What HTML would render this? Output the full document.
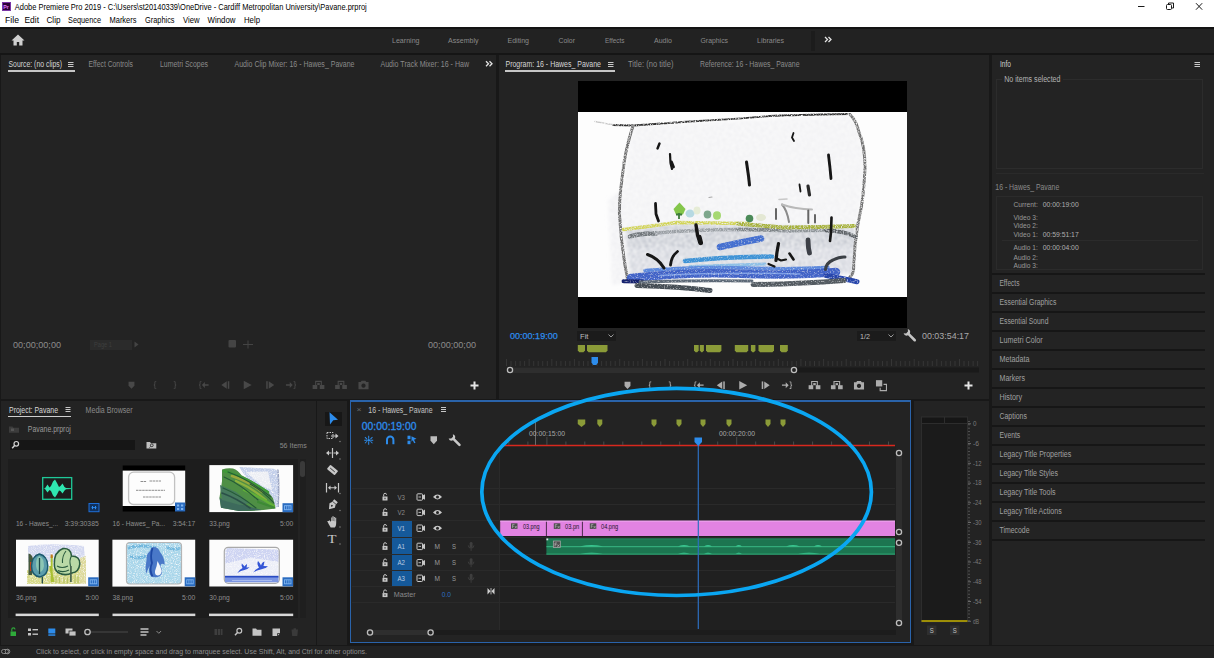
<!DOCTYPE html>
<html><head><meta charset="utf-8"><title>Adobe Premiere Pro 2019</title>
<style>
html,body{margin:0;padding:0;}
body{width:1214px;height:658px;overflow:hidden;background:#181818;position:relative;font-family:"Liberation Sans",sans-serif;}
.r{position:absolute;}
svg{position:absolute;left:0;top:0;overflow:visible;}
svg.tx text{font-family:"Liberation Sans",sans-serif;white-space:pre;}
</style></head><body>
<div class="r" style="left:0px;top:0px;width:1214px;height:26.5px;background:#ffffff;"></div>
<div class="r" style="left:0px;top:26.5px;width:1214px;height:2.5px;background:#131313;"></div>
<div class="r" style="left:0px;top:29px;width:1214px;height:23.5px;background:#222222;"></div>
<div class="r" style="left:811px;top:30.5px;width:3.5px;height:20px;background:#1c1c1c;"></div>
<div class="r" style="left:0px;top:52.5px;width:1214px;height:2.5px;background:#151515;"></div>
<div class="r" style="left:1px;top:55px;width:494.5px;height:343.5px;background:#232323;"></div>
<div class="r" style="left:498.5px;top:55px;width:490.5px;height:343.5px;background:#232323;"></div>
<div class="r" style="left:991.5px;top:55px;width:222.5px;height:590px;background:#232323;"></div>
<div class="r" style="left:1px;top:400.5px;width:314.5px;height:244px;background:#232323;"></div>
<div class="r" style="left:317px;top:400.5px;width:30px;height:244px;background:#232323;"></div>
<div class="r" style="left:350px;top:400.3px;width:561px;height:243px;background:#2a63aa;"></div>
<div class="r" style="left:351.2px;top:401.5px;width:558.6px;height:240.6px;background:#232323;"></div>
<div class="r" style="left:913.5px;top:400.5px;width:75.5px;height:244px;background:#232323;"></div>
<div class="r" style="left:0px;top:645.5px;width:1214px;height:12.5px;background:#222222;"></div>
<div class="r" style="left:1.5px;top:2.2px;width:9.4px;height:8.4px;background:#2a0438;border:1px solid #7a35a5;box-sizing:border-box;"></div>
<svg width="1214" height="658" class="tx">
<text x="3.3" y="8.50" font-size="5.5" fill="#e27dff" font-weight="bold" textLength="5.5" lengthAdjust="spacingAndGlyphs">Pr</text>
<text x="14.8" y="10.09" font-size="8.2" fill="#000" textLength="352" lengthAdjust="spacingAndGlyphs">Adobe Premiere Pro 2019 - C:\Users\st20140339\OneDrive - Cardiff Metropolitan University\Pavane.prproj</text>
<text x="5" y="23.39" font-size="8.2" fill="#000" textLength="14" lengthAdjust="spacingAndGlyphs">File</text>
<text x="24.5" y="23.39" font-size="8.2" fill="#000" textLength="14.5" lengthAdjust="spacingAndGlyphs">Edit</text>
<text x="46.5" y="23.39" font-size="8.2" fill="#000" textLength="14" lengthAdjust="spacingAndGlyphs">Clip</text>
<text x="68" y="23.39" font-size="8.2" fill="#000" textLength="33" lengthAdjust="spacingAndGlyphs">Sequence</text>
<text x="109.5" y="23.39" font-size="8.2" fill="#000" textLength="27" lengthAdjust="spacingAndGlyphs">Markers</text>
<text x="145" y="23.39" font-size="8.2" fill="#000" textLength="29.5" lengthAdjust="spacingAndGlyphs">Graphics</text>
<text x="183" y="23.39" font-size="8.2" fill="#000" textLength="16.5" lengthAdjust="spacingAndGlyphs">View</text>
<text x="207.5" y="23.39" font-size="8.2" fill="#000" textLength="28" lengthAdjust="spacingAndGlyphs">Window</text>
<text x="244" y="23.39" font-size="8.2" fill="#000" textLength="16" lengthAdjust="spacingAndGlyphs">Help</text>
</svg>
<svg width="1214" height="27"><g stroke="#1a1a1a" stroke-width="1" fill="none"><path d="M1138 6.500h6.500"/><rect x="1166.500" y="4.500" width="5" height="5" rx="1"/><path d="M1168.500 4.500v-1.500h5v5h-2"/><path d="M1196 3.200l6.200 6.500M1202.200 3.200l-6.200 6.500"/></g></svg>
<svg width="1214" height="60"><path d="M18 34.500l-6.500 6h2v5h3.300v-3.600h2.400v3.600h3.300v-5h2z" fill="#d0d0d0"/></svg>
<svg width="1214" height="658" class="tx">
<text x="392" y="42.72" font-size="8" fill="#8a8a8a" textLength="27.5" lengthAdjust="spacingAndGlyphs">Learning</text>
<text x="448" y="42.72" font-size="8" fill="#8a8a8a" textLength="30.5" lengthAdjust="spacingAndGlyphs">Assembly</text>
<text x="507.5" y="42.72" font-size="8" fill="#8a8a8a" textLength="21.5" lengthAdjust="spacingAndGlyphs">Editing</text>
<text x="558.5" y="42.72" font-size="8" fill="#8a8a8a" textLength="16.5" lengthAdjust="spacingAndGlyphs">Color</text>
<text x="605" y="42.72" font-size="8" fill="#8a8a8a" textLength="19.5" lengthAdjust="spacingAndGlyphs">Effects</text>
<text x="654" y="42.72" font-size="8" fill="#8a8a8a" textLength="18" lengthAdjust="spacingAndGlyphs">Audio</text>
<text x="700.5" y="42.72" font-size="8" fill="#8a8a8a" textLength="27.5" lengthAdjust="spacingAndGlyphs">Graphics</text>
<text x="757" y="42.72" font-size="8" fill="#8a8a8a" textLength="27" lengthAdjust="spacingAndGlyphs">Libraries</text>
</svg>
<svg width="1214" height="658"><path d="M825 37l2.500 2.500l-2.500 2.500M828.500 37l2.500 2.500l-2.500 2.500" fill="none" stroke="#e4e4e4" stroke-width="1.300"/></svg>
<svg width="1214" height="658" class="tx">
<text x="8.5" y="67.10" font-size="8.5" fill="#d6d6d6" textLength="53.5" lengthAdjust="spacingAndGlyphs">Source: (no clips)</text>
</svg>
<svg width="1214" height="100"><g stroke="#c8c8c8" stroke-width="1"><path d="M68 62.5h5.5M68 64.5h5.5M68 66.5h5.5"/><path d="M608 62.5h5.5M608 64.5h5.5M608 66.5h5.5"/><path d="M1194.5 62.5h5.5M1194.5 64.5h5.5M1194.5 66.5h5.5"/></g></svg>
<div class="r" style="left:8px;top:70.2px;width:66.5px;height:1.4px;background:#c6c6c6;"></div>
<svg width="1214" height="658" class="tx">
<text x="88.5" y="67.10" font-size="8.5" fill="#8a8a8a" textLength="44.5" lengthAdjust="spacingAndGlyphs">Effect Controls</text>
<text x="160" y="67.10" font-size="8.5" fill="#8a8a8a" textLength="48" lengthAdjust="spacingAndGlyphs">Lumetri Scopes</text>
<text x="234.5" y="67.10" font-size="8.5" fill="#8a8a8a" textLength="120" lengthAdjust="spacingAndGlyphs">Audio Clip Mixer: 16 - Hawes_ Pavane</text>
<text x="380.5" y="67.10" font-size="8.5" fill="#8a8a8a" textLength="88.5" lengthAdjust="spacingAndGlyphs">Audio Track Mixer: 16 - Haw</text>
</svg>
<svg width="1214" height="658"><path d="M486 61.200l2.500 2.500l-2.500 2.500M489.500 61.200l2.500 2.500l-2.500 2.500" fill="none" stroke="#e4e4e4" stroke-width="1.300"/></svg>
<svg width="1214" height="658" class="tx">
<text x="505.5" y="67.10" font-size="8.5" fill="#d6d6d6" textLength="95.5" lengthAdjust="spacingAndGlyphs">Program: 16 - Hawes_ Pavane</text>
</svg>
<div class="r" style="left:505px;top:70.2px;width:109.5px;height:1.4px;background:#c6c6c6;"></div>
<svg width="1214" height="658" class="tx">
<text x="628" y="67.10" font-size="8.5" fill="#8a8a8a" textLength="45.5" lengthAdjust="spacingAndGlyphs">Title: (no title)</text>
<text x="700" y="67.10" font-size="8.5" fill="#8a8a8a" textLength="99.5" lengthAdjust="spacingAndGlyphs">Reference: 16 - Hawes_ Pavane</text>
<text x="13" y="347.78" font-size="9" fill="#8c8c8c" textLength="48" lengthAdjust="spacingAndGlyphs">00;00;00;00</text>
</svg>
<div class="r" style="left:90px;top:339.5px;width:42px;height:10px;background:#2b2b2b;"></div>
<svg width="1214" height="658" class="tx">
<text x="94" y="347.23" font-size="7.5" fill="#3e3e3e" textLength="18" lengthAdjust="spacingAndGlyphs">Page 1</text>
</svg>
<svg width="1214" height="658"><g fill="#444"><path d="M134.5 341.5l4 3l-4 3z"/><rect x="228.500" y="340" width="7.5" height="7.5" rx="1"/><path d="M243 344h10v1h-10zM247.500 340.500h1v8h-1z"/></g></svg>
<svg width="1214" height="658" class="tx">
<text x="428" y="347.78" font-size="9" fill="#8c8c8c" textLength="48" lengthAdjust="spacingAndGlyphs">00;00;00;00</text>
</svg>
<svg width="1214" height="658"><g fill="#484848" stroke="none"><g transform="translate(131.5,385) scale(0.84) translate(-131.5,-385)"><path d="M128.0 381h7v5l-3.500 3.500l-3.500 -3.500z"/></g><g transform="translate(155,385) scale(0.84) translate(-155,-385)"><path d="M156.5 380.5h-1.200q-1 0 -1 1v2.300l-1 1.200l1 1.200v2.300q0 1 1 1h1.200v-1h-0.800q-0.400 0 -0.400 -0.400v-2.400l-0.800 -0.700l0.800 -0.700v-2.400q0 -0.400 0.400 -0.400h0.800z"/></g><g transform="translate(175,385) scale(0.84) translate(-175,-385)"><path d="M173.5 380.5h1.200q1 0 1 1v2.300l1 1.200l-1 1.200v2.300q0 1 -1 1h-1.200v-1h0.800q0.400 0 0.400 -0.400v-2.400l0.800 -0.700l-0.800 -0.700v-2.400q0 -0.400 -0.400 -0.400h-0.800z"/></g><g transform="translate(204,385) scale(0.84) translate(-204,-385)"><path d="M201.0 380.5h-1.200q-1 0 -1 1v2.300l-1 1.200l1 1.200v2.300q0 1 1 1h1.200v-1h-0.800q-0.400 0 -0.400 -0.400v-2.400l-0.800 -0.700l0.800 -0.700v-2.400q0 -0.400 0.400 -0.400h0.800z"/><path d="M201.5 385l3.500 -3.500v2.700h4.500v1.600h-4.500v2.700z"/></g><g transform="translate(225.5,385) scale(0.84) translate(-225.5,-385)"><path d="M220.5 385l6.500 -4.500v9z"/><rect x="228.2" y="380.5" width="1.800" height="9"/></g><g transform="translate(247.5,385) scale(0.84) translate(-247.5,-385)"><path d="M243.0 380l9.500 5l-9.500 5z"/></g><g transform="translate(270,385) scale(0.84) translate(-270,-385)"><rect x="265.5" y="380.5" width="1.800" height="9"/><path d="M268.5 380.5l6.500 4.500l-6.500 4.500z"/></g><g transform="translate(291,385) scale(0.84) translate(-291,-385)"><path d="M285 384.2h4.500v-2.700l3.500 3.500l-3.500 3.500v-2.700h-4.500z"/><path d="M294.0 380.5h1.200q1 0 1 1v2.300l1 1.200l-1 1.200v2.300q0 1 -1 1h-1.200v-1h0.800q0.400 0 0.400 -0.400v-2.400l0.800 -0.700l-0.800 -0.700v-2.400q0 -0.400 -0.400 -0.400h-0.800z"/></g><g transform="translate(318.5,385) scale(0.84) translate(-318.5,-385)"><rect x="311.5" y="385" width="5.500" height="4.800"/><rect x="320.0" y="385" width="5.500" height="4.800"/><path d="M314.5 380h8v6h-1.300v-4.700h-5.400v4.700h-1.300z"/><rect x="317.0" y="382.5" width="3" height="2.500"/></g><g transform="translate(341,385) scale(0.84) translate(-341,-385)"><rect x="334" y="385" width="5.500" height="4.800"/><rect x="342.5" y="385" width="5.500" height="4.800"/><path d="M337 380h8v6h-1.300v-4.700h-5.400v4.700h-1.300z"/><rect x="339.5" y="382.5" width="3" height="2.500"/></g><g transform="translate(363.5,385) scale(0.84) translate(-363.5,-385)"><path d="M357.5 381.5h2.700l1 -1.500h4.600l1 1.500h2.700v8.500h-12z M363.5 383.3a2.500 2.500 0 1 0 0.010 0z"/></g></g></svg>
<svg width="1214" height="658"><path d="M474.5 381.500v8M470.500 385.500h8" stroke="#e6e6e6" stroke-width="2" fill="none"/><path d="M968.500 381.500v8M964.500 385.500h8" stroke="#e6e6e6" stroke-width="2" fill="none"/></svg>
<svg width="1214" height="658" class="tx">
<text x="510" y="339.16" font-size="9.5" fill="#2d8ceb" textLength="47.7" lengthAdjust="spacingAndGlyphs" stroke="#2d8ceb" stroke-width="0.250">00:00:19:00</text>
</svg>
<div class="r" style="left:576.5px;top:331px;width:39px;height:9.5px;background:#1b1b1b;"></div>
<svg width="1214" height="658" class="tx">
<text x="580" y="338.62" font-size="8" fill="#bdbdbd" textLength="8.5" lengthAdjust="spacingAndGlyphs">Fit</text>
</svg>
<div class="r" style="left:856.5px;top:331px;width:39px;height:9.5px;background:#1b1b1b;"></div>
<svg width="1214" height="658" class="tx">
<text x="860" y="338.62" font-size="8" fill="#bdbdbd" textLength="10" lengthAdjust="spacingAndGlyphs">1/2</text>
</svg>
<svg width="1214" height="658"><g stroke="#9a9a9a" stroke-width="1" fill="none"><path d="M608.500 334.500l2.500 2.500l2.500 -2.500"/><path d="M888.500 334.500l2.500 2.500l2.500 -2.500"/></g><g transform="translate(910,335.5) rotate(-45)"><path d="M-1.300 -1.500v8.200a1.300 1.300 0 0 0 2.600 0v-8.200a3.400 3.400 0 0 0 1.700 -4.600l-1.700 1.900h-2.600l-1.700 -1.900a3.400 3.400 0 0 0 1.700 4.600z" fill="#c4c4c4"/></g></svg>
<svg width="1214" height="658" class="tx">
<text x="922" y="339.16" font-size="9.5" fill="#a9a9a9" textLength="47" lengthAdjust="spacingAndGlyphs">00:03:54:17</text>
</svg>
<svg width="1214" height="658"><g fill="#8b9b38"><path d="M577.8 345h7.2v5.5l-1.500 1.800h-4.2l-1.500 -1.800z"/><path d="M587 345h20.5v5.5l-1.500 1.800h-17.5l-1.500 -1.800z"/><path d="M694 345h4.7v5.5l-1.500 1.800h-1.7l-1.500 -1.800z"/><path d="M699.8 345h4.1v5.5l-1.500 1.800h-1.1l-1.500 -1.800z"/><path d="M706 345h15.4v5.5l-1.500 1.800h-12.4l-1.500 -1.800z"/><path d="M734.8 345h13.4v5.5l-1.500 1.800h-10.4l-1.500 -1.800z"/><path d="M750.9 345h4.5v5.5l-1.500 1.800h-1.5l-1.500 -1.800z"/><path d="M758.5 345h15.5v5.5l-1.500 1.800h-12.5l-1.500 -1.800z"/><path d="M780 345h7.8v5.5l-1.500 1.800h-4.8l-1.500 -1.800z"/></g><g stroke="#363636" stroke-width="1"><path d="M506.5 359v7"/><path d="M511.0 361v5"/><path d="M515.6 361v5"/><path d="M520.1 361v5"/><path d="M524.6 361v5"/><path d="M529.1 359v7"/><path d="M533.7 361v5"/><path d="M538.2 361v5"/><path d="M542.7 361v5"/><path d="M547.3 361v5"/><path d="M551.8 359v7"/><path d="M556.3 361v5"/><path d="M560.9 361v5"/><path d="M565.4 361v5"/><path d="M569.9 361v5"/><path d="M574.4 359v7"/><path d="M579.0 361v5"/><path d="M583.5 361v5"/><path d="M588.0 361v5"/><path d="M592.6 361v5"/><path d="M597.1 359v7"/><path d="M601.6 361v5"/><path d="M606.2 361v5"/><path d="M610.7 361v5"/><path d="M615.2 361v5"/><path d="M619.7 359v7"/><path d="M624.3 361v5"/><path d="M628.8 361v5"/><path d="M633.3 361v5"/><path d="M637.9 361v5"/><path d="M642.4 359v7"/><path d="M646.9 361v5"/><path d="M651.5 361v5"/><path d="M656.0 361v5"/><path d="M660.5 361v5"/><path d="M665.0 359v7"/><path d="M669.6 361v5"/><path d="M674.1 361v5"/><path d="M678.6 361v5"/><path d="M683.2 361v5"/><path d="M687.7 359v7"/><path d="M692.2 361v5"/><path d="M696.8 361v5"/><path d="M701.3 361v5"/><path d="M705.8 361v5"/><path d="M710.3 359v7"/><path d="M714.9 361v5"/><path d="M719.4 361v5"/><path d="M723.9 361v5"/><path d="M728.5 361v5"/><path d="M733.0 359v7"/><path d="M737.5 361v5"/><path d="M742.1 361v5"/><path d="M746.6 361v5"/><path d="M751.1 361v5"/><path d="M755.6 359v7"/><path d="M760.2 361v5"/><path d="M764.7 361v5"/><path d="M769.2 361v5"/><path d="M773.8 361v5"/><path d="M778.3 359v7"/><path d="M782.8 361v5"/><path d="M787.4 361v5"/><path d="M791.9 361v5"/><path d="M796.4 361v5"/><path d="M800.9 359v7"/><path d="M805.5 361v5"/><path d="M810.0 361v5"/><path d="M814.5 361v5"/><path d="M819.1 361v5"/><path d="M823.6 359v7"/><path d="M828.1 361v5"/><path d="M832.7 361v5"/><path d="M837.2 361v5"/><path d="M841.7 361v5"/><path d="M846.2 359v7"/><path d="M850.8 361v5"/><path d="M855.3 361v5"/><path d="M859.8 361v5"/><path d="M864.4 361v5"/><path d="M868.9 359v7"/><path d="M873.4 361v5"/><path d="M878.0 361v5"/><path d="M882.5 361v5"/><path d="M887.0 361v5"/><path d="M891.5 359v7"/><path d="M896.1 361v5"/><path d="M900.6 361v5"/><path d="M905.1 361v5"/><path d="M909.7 361v5"/><path d="M914.2 359v7"/><path d="M918.7 361v5"/><path d="M923.3 361v5"/><path d="M927.8 361v5"/><path d="M932.3 361v5"/><path d="M936.8 359v7"/><path d="M941.4 361v5"/><path d="M945.9 361v5"/><path d="M950.4 361v5"/><path d="M955.0 361v5"/><path d="M959.5 359v7"/><path d="M964.0 361v5"/><path d="M968.6 361v5"/><path d="M973.1 361v5"/><path d="M977.6 361v5"/></g><rect x="510" y="367.500" width="469" height="5" fill="#1a1a1a"/><rect x="510" y="367.500" width="284" height="5.500" rx="2.500" fill="#2e2e2e"/><g fill="#232323" stroke="#bdbdbd" stroke-width="1.300"><circle cx="510" cy="370" r="2.600"/><circle cx="794" cy="370" r="2.600"/></g><path d="M591.500 357h6.500v5.500l-1.700 2.500h-3.100l-1.700 -2.500z" fill="#2d8ceb"/></svg>
<svg width="1214" height="658"><g fill="#adadad" stroke="none"><g transform="translate(627.5,385.2) scale(0.84) translate(-627.5,-385.2)"><path d="M624.0 381.2h7v5l-3.500 3.500l-3.500 -3.500z"/></g><g transform="translate(650,385.2) scale(0.84) translate(-650,-385.2)"><path d="M651.5 380.7h-1.200q-1 0 -1 1v2.300l-1 1.200l1 1.200v2.300q0 1 1 1h1.200v-1h-0.800q-0.400 0 -0.400 -0.400v-2.400l-0.800 -0.700l0.800 -0.700v-2.400q0 -0.400 0.400 -0.400h0.800z"/></g><g transform="translate(670,385.2) scale(0.84) translate(-670,-385.2)"><path d="M668.5 380.7h1.200q1 0 1 1v2.300l1 1.200l-1 1.200v2.300q0 1 -1 1h-1.200v-1h0.800q0.400 0 0.400 -0.400v-2.400l0.800 -0.700l-0.800 -0.700v-2.400q0 -0.400 -0.400 -0.400h-0.800z"/></g><g transform="translate(699,385.2) scale(0.84) translate(-699,-385.2)"><path d="M696.0 380.7h-1.200q-1 0 -1 1v2.300l-1 1.200l1 1.200v2.300q0 1 1 1h1.200v-1h-0.800q-0.400 0 -0.400 -0.400v-2.400l-0.800 -0.700l0.800 -0.700v-2.400q0 -0.400 0.400 -0.400h0.800z"/><path d="M696.5 385.2l3.500 -3.500v2.700h4.500v1.600h-4.500v2.700z"/></g><g transform="translate(721,385.2) scale(0.84) translate(-721,-385.2)"><path d="M716 385.2l6.500 -4.500v9z"/><rect x="723.7" y="380.7" width="1.800" height="9"/></g><g transform="translate(743,385.2) scale(0.84) translate(-743,-385.2)"><path d="M738.5 380.2l9.500 5l-9.500 5z"/></g><g transform="translate(765.5,385.2) scale(0.84) translate(-765.5,-385.2)"><rect x="761.0" y="380.7" width="1.800" height="9"/><path d="M764.0 380.7l6.500 4.500l-6.500 4.500z"/></g><g transform="translate(787,385.2) scale(0.84) translate(-787,-385.2)"><path d="M781 384.4h4.500v-2.700l3.500 3.500l-3.500 3.500v-2.700h-4.500z"/><path d="M790.0 380.7h1.200q1 0 1 1v2.300l1 1.200l-1 1.200v2.300q0 1 -1 1h-1.200v-1h0.800q0.400 0 0.400 -0.400v-2.400l0.800 -0.700l-0.800 -0.700v-2.400q0 -0.400 -0.400 -0.400h-0.800z"/></g><g transform="translate(814.5,385.2) scale(0.84) translate(-814.5,-385.2)"><rect x="807.5" y="385.2" width="5.500" height="4.800"/><rect x="816.0" y="385.2" width="5.500" height="4.800"/><path d="M810.5 380.2h8v6h-1.300v-4.700h-5.400v4.700h-1.300z"/><rect x="813.0" y="382.7" width="3" height="2.500"/></g><g transform="translate(836.8,385.2) scale(0.84) translate(-836.8,-385.2)"><rect x="829.8" y="385.2" width="5.500" height="4.800"/><rect x="838.3" y="385.2" width="5.500" height="4.800"/><path d="M832.8 380.2h8v6h-1.300v-4.700h-5.400v4.700h-1.300z"/><rect x="835.3" y="382.7" width="3" height="2.500"/></g><g transform="translate(859,385.2) scale(0.84) translate(-859,-385.2)"><path d="M853 381.7h2.700l1 -1.500h4.600l1 1.500h2.700v8.500h-12z M859 383.5a2.500 2.500 0 1 0 0.010 0z"/></g><g transform="translate(881,385.2) scale(0.84) translate(-881,-385.2)"><rect x="875" y="379.2" width="7.500" height="7.500"/><path d="M880 388.2v3.500h7.500v-7.500h-3.500" fill="none" stroke="#adadad" stroke-width="1.300"/></g></g></svg>
<div class="r" style="left:578px;top:81px;width:329px;height:247px;background:#000;"></div>
<div class="r" style="left:578px;top:112px;width:329px;height:185px;background:#fdfdfd;"></div>
<svg width="1214" height="658"><defs><filter id="cr" x="-5%" y="-30%" width="110%" height="160%"><feTurbulence type="fractalNoise" baseFrequency="0.85" numOctaves="2" seed="4" result="n"/><feColorMatrix in="n" type="matrix" values="0 0 0 0 0 0 0 0 0 0 0 0 0 0 0 0 0 0 -2.600 2.100" result="m"/><feComposite in="SourceGraphic" in2="m" operator="in"/><feGaussianBlur stdDeviation="0.400"/></filter><filter id="wash" x="-5%" y="-10%" width="110%" height="120%"><feTurbulence type="fractalNoise" baseFrequency="0.550" numOctaves="3" seed="9" result="n"/><feColorMatrix in="n" type="matrix" values="0 0 0 0 0 0 0 0 0 0 0 0 0 0 0 0 0 0 -2.200 1.600" result="m"/><feGaussianBlur in="SourceGraphic" stdDeviation="1.500" result="b"/><feComposite in="b" in2="m" operator="in"/><feGaussianBlur stdDeviation="0.900"/></filter><filter id="cr2" x="-5%" y="-30%" width="110%" height="160%"><feTurbulence type="fractalNoise" baseFrequency="0.700" numOctaves="2" seed="7" result="n"/><feColorMatrix in="n" type="matrix" values="0 0 0 0 0 0 0 0 0 0 0 0 0 0 0 0 0 0 -2.200 2.150" result="m"/><feComposite in="SourceGraphic" in2="m" operator="in"/><feGaussianBlur stdDeviation="0.450"/></filter><filter id="ink" x="-20%" y="-20%" width="140%" height="140%"><feGaussianBlur stdDeviation="0.350"/></filter><clipPath id="vc"><rect x="578" y="112" width="329" height="185"/></clipPath></defs><g clip-path="url(#vc)"><g filter="url(#wash)"><path d="M633 126L850 115Q866 140 865 170L856 230L852 275L628 279L620 205Z" fill="#eeeef1"/><path d="M608 200L622 190L626 282L612 285Z" fill="#ececf0"/><path d="M625 229L676 224L748 225L855 228L853 274L630 278Z" fill="#c4c8d2"/><path d="M626 229L676 224L748 225L855 228L855 246L628 248Z" fill="#b2b7c2"/></g><g fill="none" stroke-linecap="round" stroke-linejoin="round" filter="url(#cr)"><path d="M613 125L633.500 125.500L690 121.500L738 118.600L773 115.800L820 114.500L850 114" stroke="#2e2e2e" stroke-width="1.900"/><path d="M595 121.500L613 124.800" stroke="#c8c8c8" stroke-width="1.500"/><path d="M633 126Q625 150 622.500 175Q619 200 619.500 215Q621 245 627.500 279" stroke="#6f6f6f" stroke-width="3"/><path d="M850 114.500Q856 120 859 132Q865 146 865 168Q864 190 861.500 206Q857 226 855 245L853.500 270Q852.500 275 850 277" stroke="#727272" stroke-width="3"/><path d="M630 236.500Q640 233 656 233.500" stroke="#6f7579" stroke-width="4.500"/><path d="M656 233Q700 229 748 229.500L790 231" stroke="#9a9fa4" stroke-width="3.500"/><path d="M738 229.500L783 230" stroke="#7e8488" stroke-width="3.500"/><path d="M790 231L826 230.500" stroke="#8e9498" stroke-width="3"/><path d="M826 230.500Q845 231 856 237" stroke="#5d6266" stroke-width="3.800"/><path d="M623.500 229.500Q650 226.500 676 222.500L748 223.500" stroke="#d2d458" stroke-width="3.600"/><path d="M738 223.800L783 227.500L820 227L854 226" stroke="#a5b038" stroke-width="4"/></g><g fill="none" stroke-linecap="round" stroke-linejoin="round" filter="url(#cr2)"><path d="M720 247Q740 242.500 761 238.500" stroke="#456fd0" stroke-width="6.500"/><path d="M685 261Q720 257.500 748 257L772 256.500" stroke="#3f93d6" stroke-width="4.600"/><path d="M690 266.500L765 264" stroke="#8fc0e6" stroke-width="3"/><path d="M645 270.500Q700 266 748 268Q790 269.500 828 267.500" stroke="#5c88dc" stroke-width="3.500"/><path d="M631 278Q690 271.500 748 274Q800 275.500 836 272" stroke="#3558c4" stroke-width="8.500" stroke-opacity="0.920"/><path d="M660 275.500Q720 272 800 274" stroke="#7d9fe6" stroke-width="1.500"/><path d="M623.500 281.300L642 281.500" stroke="#17246e" stroke-width="4"/><path d="M826 275.500Q845 279 857 281.800" stroke="#2845aa" stroke-width="5"/><path d="M640 282Q700 280 752 281" stroke="#5c6876" stroke-width="3"/><path d="M637 285.500Q680 286.500 710 290.500" stroke="#454d54" stroke-width="5"/><path d="M753 284.500Q800 284 844 280.500" stroke="#525a61" stroke-width="5"/></g><g fill="none" stroke-linecap="round" stroke-linejoin="round" filter="url(#ink)"><path d="M659.500 143.500L657.500 148.500" stroke="#141414" stroke-width="2.400"/><path d="M670 154L670.500 163L672 169" stroke="#141414" stroke-width="2.200"/><path d="M671.500 162L673.500 167" stroke="#141414" stroke-width="2.800"/><path d="M746.500 162L748.500 176L749.500 185" stroke="#141414" stroke-width="3"/><path d="M793.500 133L792 137.500L794 141" stroke="#141414" stroke-width="1.800"/><path d="M828.500 155L830 168L831 178.500" stroke="#141414" stroke-width="2.800"/><path d="M799.500 184.500L800.500 191.500" stroke="#141414" stroke-width="1.800"/><path d="M808 186L809.500 195" stroke="#2a2a2a" stroke-width="3.200"/><path d="M655.500 203.500L656 214L658.500 221" stroke="#141414" stroke-width="2.800"/><path d="M696 225L697.500 235L700 243" stroke="#141414" stroke-width="3.400"/><path d="M699.500 237L701 243" stroke="#141414" stroke-width="4.200"/><path d="M647.500 254.500Q658 258 664 268" stroke="#141414" stroke-width="3"/><path d="M677.500 251.500Q671.500 256 670.500 265" stroke="#141414" stroke-width="2.800"/><path d="M831.500 217.500L831 232L830 241" stroke="#141414" stroke-width="2.600"/><path d="M808 240L808.500 248L809.500 253" stroke="#3c4046" stroke-width="4.800"/><path d="M778.500 243.500L777 252L776 260.500" stroke="#141414" stroke-width="3.200"/><path d="M776 258L781 260.500L786 259.500" stroke="#141414" stroke-width="2.200"/><path d="M768.500 264L774.500 266.500" stroke="#141414" stroke-width="2.200"/><path d="M789.500 253.500L793.500 259.500" stroke="#141414" stroke-width="2.600"/><path d="M825.500 269.500Q826 263 833 260Q840 256.500 845 257" stroke="#3b3f44" stroke-width="3"/><path d="M776 209L776 219" stroke="#555" stroke-width="1.800"/><path d="M782 204.500Q787 210 789 222" stroke="#8b8b8b" stroke-width="2"/><path d="M782 204.500Q795 209 812 209.500" stroke="#b9b9b9" stroke-width="2"/><path d="M808.300 210.500L808.300 223" stroke="#666" stroke-width="2"/><path d="M815 215L815 222.500" stroke="#555" stroke-width="1.800"/><path d="M779 199.500L787 199" stroke="#c8c8c8" stroke-width="1.500"/><path d="M709 197.500L712 197" stroke="#aaa" stroke-width="1.200"/></g><g filter="url(#ink)"><path d="M679.500 202.500L685.500 209L683 214.500L676 214.500L673.500 209Z" fill="#84c64b"/><path d="M679 213v6M676 214.500h6" stroke="#3d7a3a" stroke-width="1.800" fill="none"/><ellipse cx="690" cy="213.500" rx="4.500" ry="4" fill="#b6d9e2"/><ellipse cx="697" cy="210.500" rx="3.500" ry="4" fill="#e6ecd6"/><ellipse cx="707.500" cy="214.500" rx="3.800" ry="4" fill="#7ea78c"/><ellipse cx="717" cy="215.500" rx="4" ry="4.200" fill="#a6d872"/><circle cx="749.500" cy="218.500" r="3.800" fill="#4c8a58"/><ellipse cx="761" cy="217.500" rx="5" ry="3.500" fill="#e4e8d4"/></g></g></svg>
<svg width="1214" height="658" class="tx">
<text x="1000" y="66.90" font-size="8.5" fill="#d0d0d0" textLength="11" lengthAdjust="spacingAndGlyphs">Info</text>
</svg>
<div class="r" style="left:996px;top:79px;width:207px;height:90px;border:1px solid #2c2c2c;box-sizing:border-box;"></div>
<div class="r" style="left:996px;top:173px;width:208px;height:1px;background:#2a2a2a;"></div>
<div class="r" style="left:1002px;top:75px;width:61px;height:9px;background:#232323;"></div>
<svg width="1214" height="658" class="tx">
<text x="1004.2" y="82.30" font-size="8.5" fill="#b4b4b4" textLength="56.3" lengthAdjust="spacingAndGlyphs">No items selected</text>
<text x="995.3" y="190.10" font-size="8.5" fill="#8a8a8a" textLength="64" lengthAdjust="spacingAndGlyphs">16 - Hawes_ Pavane</text>
</svg>
<div class="r" style="left:996px;top:196px;width:207px;height:74px;border:1px solid #2b2b2b;box-sizing:border-box;"></div>
<div class="r" style="left:1002px;top:240px;width:196px;height:1px;background:#2b2b2b;"></div>
<svg width="1214" height="658" class="tx">
<text x="1013.5" y="207.42" font-size="8" fill="#9a9a9a" textLength="24.3" lengthAdjust="spacingAndGlyphs">Current:</text>
<text x="1042.7" y="207.42" font-size="8" fill="#b0b0b0" textLength="36" lengthAdjust="spacingAndGlyphs">00:00:19:00</text>
<text x="1013.5" y="219.52" font-size="8" fill="#9a9a9a" textLength="24.3" lengthAdjust="spacingAndGlyphs">Video 3:</text>
<text x="1013.5" y="228.42" font-size="8" fill="#9a9a9a" textLength="24.3" lengthAdjust="spacingAndGlyphs">Video 2:</text>
<text x="1013.5" y="237.42" font-size="8" fill="#9a9a9a" textLength="24.3" lengthAdjust="spacingAndGlyphs">Video 1:</text>
<text x="1042.7" y="237.42" font-size="8" fill="#b0b0b0" textLength="36" lengthAdjust="spacingAndGlyphs">00:59:51:17</text>
<text x="1013.5" y="250.42" font-size="8" fill="#9a9a9a" textLength="24.3" lengthAdjust="spacingAndGlyphs">Audio 1:</text>
<text x="1042.7" y="250.42" font-size="8" fill="#b0b0b0" textLength="36" lengthAdjust="spacingAndGlyphs">00:00:04:00</text>
<text x="1013.5" y="259.52" font-size="8" fill="#9a9a9a" textLength="24.3" lengthAdjust="spacingAndGlyphs">Audio 2:</text>
<text x="1013.5" y="268.32" font-size="8" fill="#9a9a9a" textLength="24.3" lengthAdjust="spacingAndGlyphs">Audio 3:</text>
</svg>
<div class="r" style="left:992px;top:272.5px;width:213px;height:2px;background:#161616;"></div>
<svg width="1214" height="658" class="tx">
<text x="999.5" y="286.30" font-size="8.5" fill="#a0a0a0" textLength="19.9" lengthAdjust="spacingAndGlyphs">Effects</text>
</svg>
<div class="r" style="left:992px;top:292.0px;width:213px;height:2px;background:#161616;"></div>
<svg width="1214" height="658" class="tx">
<text x="999.5" y="305.30" font-size="8.5" fill="#a0a0a0" textLength="56.9" lengthAdjust="spacingAndGlyphs">Essential Graphics</text>
</svg>
<div class="r" style="left:992px;top:311.0px;width:213px;height:2px;background:#161616;"></div>
<svg width="1214" height="658" class="tx">
<text x="999.5" y="324.30" font-size="8.5" fill="#a0a0a0" textLength="48.9" lengthAdjust="spacingAndGlyphs">Essential Sound</text>
</svg>
<div class="r" style="left:992px;top:330.0px;width:213px;height:2px;background:#161616;"></div>
<svg width="1214" height="658" class="tx">
<text x="999.5" y="343.30" font-size="8.5" fill="#a0a0a0" textLength="43.2" lengthAdjust="spacingAndGlyphs">Lumetri Color</text>
</svg>
<div class="r" style="left:992px;top:349.0px;width:213px;height:2px;background:#161616;"></div>
<svg width="1214" height="658" class="tx">
<text x="999.5" y="362.30" font-size="8.5" fill="#a0a0a0" textLength="30" lengthAdjust="spacingAndGlyphs">Metadata</text>
</svg>
<div class="r" style="left:992px;top:368.0px;width:213px;height:2px;background:#161616;"></div>
<svg width="1214" height="658" class="tx">
<text x="999.5" y="381.30" font-size="8.5" fill="#a0a0a0" textLength="25.5" lengthAdjust="spacingAndGlyphs">Markers</text>
</svg>
<div class="r" style="left:992px;top:387.0px;width:213px;height:2px;background:#161616;"></div>
<svg width="1214" height="658" class="tx">
<text x="999.5" y="400.30" font-size="8.5" fill="#a0a0a0" textLength="22.5" lengthAdjust="spacingAndGlyphs">History</text>
</svg>
<div class="r" style="left:992px;top:406.0px;width:213px;height:2px;background:#161616;"></div>
<svg width="1214" height="658" class="tx">
<text x="999.5" y="419.30" font-size="8.5" fill="#a0a0a0" textLength="27.4" lengthAdjust="spacingAndGlyphs">Captions</text>
</svg>
<div class="r" style="left:992px;top:425.0px;width:213px;height:2px;background:#161616;"></div>
<svg width="1214" height="658" class="tx">
<text x="999.5" y="438.30" font-size="8.5" fill="#a0a0a0" textLength="20.7" lengthAdjust="spacingAndGlyphs">Events</text>
</svg>
<div class="r" style="left:992px;top:444.0px;width:213px;height:2px;background:#161616;"></div>
<svg width="1214" height="658" class="tx">
<text x="999.5" y="457.30" font-size="8.5" fill="#a0a0a0" textLength="71.8" lengthAdjust="spacingAndGlyphs">Legacy Title Properties</text>
</svg>
<div class="r" style="left:992px;top:463.0px;width:213px;height:2px;background:#161616;"></div>
<svg width="1214" height="658" class="tx">
<text x="999.5" y="476.30" font-size="8.5" fill="#a0a0a0" textLength="58.5" lengthAdjust="spacingAndGlyphs">Legacy Title Styles</text>
</svg>
<div class="r" style="left:992px;top:482.0px;width:213px;height:2px;background:#161616;"></div>
<svg width="1214" height="658" class="tx">
<text x="999.5" y="495.30" font-size="8.5" fill="#a0a0a0" textLength="56" lengthAdjust="spacingAndGlyphs">Legacy Title Tools</text>
</svg>
<div class="r" style="left:992px;top:501.0px;width:213px;height:2px;background:#161616;"></div>
<svg width="1214" height="658" class="tx">
<text x="999.5" y="514.30" font-size="8.5" fill="#a0a0a0" textLength="62.2" lengthAdjust="spacingAndGlyphs">Legacy Title Actions</text>
</svg>
<div class="r" style="left:992px;top:520.0px;width:213px;height:2px;background:#161616;"></div>
<svg width="1214" height="658" class="tx">
<text x="999.5" y="533.30" font-size="8.5" fill="#a0a0a0" textLength="30" lengthAdjust="spacingAndGlyphs">Timecode</text>
</svg>
<div class="r" style="left:992px;top:539.0px;width:213px;height:2px;background:#161616;"></div>
<svg width="1214" height="658" class="tx">
<text x="9" y="412.60" font-size="8.5" fill="#d6d6d6" textLength="49" lengthAdjust="spacingAndGlyphs">Project: Pavane</text>
</svg>
<div class="r" style="left:8px;top:415.5px;width:62.5px;height:1.5px;background:#cfcfcf;"></div>
<svg width="1214" height="658" class="tx">
<text x="85.6" y="412.60" font-size="8.5" fill="#8a8a8a" textLength="47" lengthAdjust="spacingAndGlyphs">Media Browser</text>
</svg>
<svg width="1214" height="658"><g stroke="#c8c8c8" stroke-width="1"><path d="M65.500 407.500h5M65.500 409.500h5M65.500 411.500h5M441 407.500h5M441 409.500h5M441 411.500h5"/></g><path d="M9 426.500h3.500l1 1.200h5.500v5h-10z" fill="#3c3c3c"/><rect x="11" y="428.500" width="3" height="2.500" fill="#555"/></svg>
<svg width="1214" height="658" class="tx">
<text x="27.8" y="431.70" font-size="8.5" fill="#9a9a9a" textLength="43" lengthAdjust="spacingAndGlyphs">Pavane.prproj</text>
</svg>
<div class="r" style="left:9.5px;top:439.5px;width:125px;height:10.5px;background:#161616;"></div>
<svg width="1214" height="658"><circle cx="16.300" cy="443.800" r="2.300" fill="none" stroke="#d0d0d0" stroke-width="1.200"/><path d="M14.600 445.600l-2.400 2.600" stroke="#d0d0d0" stroke-width="1.500"/><path d="M146.500 442h3.500l1 1.200h5.300v5.300h-9.800z" fill="#c0c0c0"/><circle cx="151.800" cy="445.300" r="1.400" fill="none" stroke="#232323" stroke-width="0.800"/><path d="M150.800 446.300l-1.300 1.300" stroke="#232323" stroke-width="0.800"/></svg>
<svg width="1214" height="658" class="tx">
<text x="279.7" y="448.22" font-size="8" fill="#8a8a8a" textLength="27" lengthAdjust="spacingAndGlyphs">56 Items</text>
</svg>
<div class="r" style="left:8px;top:459px;width:290px;height:158.5px;background:#1d1d1d;"></div>
<div class="r" style="left:299.5px;top:459px;width:6px;height:158.5px;background:#1f1f1f;"></div>
<div class="r" style="left:300px;top:460.5px;width:5px;height:16px;background:#3a3a3a;border-radius:2.500px;"></div>
<svg width="1214" height="658"><rect x="42.700" y="477.600" width="29" height="21.700" fill="#1d1d1d" stroke="#1fc898" stroke-width="1.300"/><path d="M43.500 488.500L45 488.300L47.500 484.500L49.500 487.500L51 486L53 481.500L55 479.500L57 483L59 487L60.500 486L62.500 483.500L64.500 487L66 488L71 488.300L71 488.900L66 489.200L64.500 490.500L62.500 493.500L60.500 491L59 490.500L57 494.500L55 497.500L53 495.500L51 491L49.500 490L47.500 492.500L45 488.900Z" fill="#2fe6b0"/><rect x="89" y="503.500" width="10" height="8.200" fill="#10305c" stroke="#1f6fd8" stroke-width="1"/><path d="M91.500 507.600h5M92.500 506v3.200M95.500 506v3.200" stroke="#2d8cf0" stroke-width="1"/><rect x="122.700" y="465.500" width="62.500" height="46" fill="#000"/><rect x="122.700" y="470.600" width="62.500" height="35.400" fill="#fbfbfb"/><rect x="128.600" y="472.200" width="46" height="32.300" rx="5" fill="#fdfdfd" stroke="#c2c2c2" stroke-width="1.300"/><path d="M140.500 481.500h6M149.500 481h11.500M136 490.300h29M143 497h18.500" stroke="#8e8e8e" stroke-width="1" stroke-dasharray="2.500 0.600"/><rect x="175" y="502.500" width="10.200" height="9" fill="#2a6cc0"/><path d="M177 504.500h2.200v2h-2.200zM181 504.500h2.200v2h-2.200zM177 508h2.200v2h-2.200zM181 508h2.200v2h-2.200z" fill="#7fb4f0"/><defs><filter id="tcr" x="-10%" y="-10%" width="120%" height="120%"><feTurbulence type="fractalNoise" baseFrequency="0.900" numOctaves="2" seed="2" result="n"/><feColorMatrix in="n" type="matrix" values="0 0 0 0 0 0 0 0 0 0 0 0 0 0 0 0 0 0 -2.400 2.100" result="m"/><feComposite in="SourceGraphic" in2="m" operator="in"/><feGaussianBlur stdDeviation="0.450"/></filter><filter id="tbl" x="-10%" y="-10%" width="120%" height="120%"><feGaussianBlur stdDeviation="0.500"/></filter></defs><rect x="209.300" y="465.100" width="83.800" height="47" fill="#fcfcfc"/><g filter="url(#tcr)"><path d="M239 467L270 468.500Q278 468.500 278.500 474L278.500 507L262 509L248 480Z" fill="#c3cfea"/><path d="M246 472L268 471.500L272 490L262 486Z" fill="#eceef4"/><path d="M277.800 469.500Q279.500 485 278 507" stroke="#98a2c0" stroke-width="1.600" fill="none"/></g><g filter="url(#tbl)"><path d="M222 469.500Q228 467.500 233 468.500Q238 470 241.500 475.300L252.700 481.300L267 490.600L273 498.300L275.600 508.500Q255 511.500 239 511L221 507.700L219.500 497.400L222 481.300Z" fill="#4f8f45"/><path d="M222 499L240 504L262 510L239 511L221 507.700L219.500 497.400Z" fill="#3e6b5c"/><path d="M220 485L236 492L250 503L240 505L222 500Z" fill="#467a5e"/><g fill="none" stroke-linecap="round"><path d="M224 471Q244 476 268 492" stroke="#3f9a38" stroke-width="2.500"/><path d="M232 476Q250 482 262 492" stroke="#9aa83e" stroke-width="2.600"/><path d="M236 481Q252 488 266 500" stroke="#8db23c" stroke-width="2.200"/><path d="M244 490Q260 497 274 506" stroke="#62b038" stroke-width="2.400"/><path d="M224 477Q240 484 258 500M223 488Q240 495 256 508M228 472Q250 480 271 497M250 484Q264 492 274 503" stroke="#255a36" stroke-width="1.100"/><path d="M222 493Q236 498 250 508" stroke="#2c5048" stroke-width="1.600"/><path d="M258 502L274 507.500" stroke="#3c8a34" stroke-width="2"/></g></g><rect x="282.5" y="503.2" width="10.5" height="9" fill="#2a6cc0"/><rect x="284.5" y="505.7" width="6.5" height="4" fill="none" stroke="#7fb4f0" stroke-width="0.9"/><path d="M286.7 505.7v4M288.9 505.7v4" stroke="#7fb4f0" stroke-width="0.8"/><rect x="16" y="539.700" width="82.700" height="46.800" fill="#fcfcfc"/><g filter="url(#tcr)"><path d="M28 546Q50 542.500 84 546L85 562L28 562Z" fill="#d3d8f0"/><path d="M27 570L86 566L86 584L27 584Z" fill="#d6d988"/><path d="M80 558L86 556L86 584L79 584Z" fill="#ddd99a"/></g><g filter="url(#tbl)"><path d="M28.500 553.500Q33 554 33.500 562L32 575L28.500 575Z" fill="#44583c"/><path d="M30 562L32.500 562L32 571L30 571Z" fill="#c04a1c"/><path d="M39.400 554Q47.500 556 47.800 566Q48 575 40 577Q31.500 576 31.500 566Q32 556 39.400 554Z" fill="#5b9dab"/><path d="M39.400 556Q44 558 44 566Q43 572 39.400 572Q36 570 36 564Q36 558 39.400 556Z" fill="#8cc6b4"/><path d="M39.400 554Q47.500 556 47.800 566Q48 575 40 577Q31.500 576 31.500 566Q32 556 39.400 554Z" fill="none" stroke="#1d5a6e" stroke-width="1.500"/><path d="M39.500 558L39.500 574M42.300 577L42.300 583.500" stroke="#1f4a4a" stroke-width="1.300"/><path d="M51.700 555.500L51.700 582M50 566L53.500 582" stroke="#a9c032" stroke-width="2"/><path d="M51.700 554.500v3.500" stroke="#c47a1c" stroke-width="2"/><path d="M63 548.600Q71 548 71.500 556Q80 556 79.800 564Q79 572 72 573Q66 576 60 573.500Q54 571 54.300 564Q54 552 63 548.600Z" fill="#b9d9a6"/><path d="M63 548.600Q71 548 71.500 556Q80 556 79.800 564Q79 572 72 573Q66 576 60 573.500Q54 571 54.300 564Q54 552 63 548.600Z" fill="none" stroke="#2c5c40" stroke-width="1.600"/><path d="M57 566Q62 569 68 566M58 570.500Q63 573 69 570M66 551Q62 556 62.500 563M71.500 556Q69 560 70.500 566" stroke="#2c5c40" stroke-width="1.100" fill="none"/><path d="M70.900 566L70.900 582" stroke="#3c5a48" stroke-width="1.600"/><path d="M56 576v7M59.500 577v6M64 577v6.500M67.500 577.500v6M75 575v8M78 576v7" stroke="#b6c466" stroke-width="1.200"/></g><rect x="88.2" y="577.3" width="10.5" height="9" fill="#2a6cc0"/><rect x="90.2" y="579.8" width="6.5" height="4" fill="none" stroke="#7fb4f0" stroke-width="0.9"/><path d="M92.4 579.8v4M94.60000000000001 579.8v4" stroke="#7fb4f0" stroke-width="0.8"/><rect x="112.400" y="539.700" width="82.800" height="46.900" fill="#fcfcfc"/><g filter="url(#tcr)"><rect x="126.500" y="542.500" width="55" height="41.500" rx="3" fill="#a9d6ea"/><path d="M128 548Q140 544 156 548M130 556Q138 560 146 556M166 547Q174 551 180 548" stroke="#6fb6dc" stroke-width="3" fill="none"/></g><rect x="126.500" y="542.500" width="55" height="41.500" rx="3.500" fill="none" stroke="#b4b4b4" stroke-width="1.200" filter="url(#tbl)"/><g filter="url(#tbl)"><path d="M153 547Q158 546.500 160 552Q165 558 164.500 565Q161 562 160.500 566Q164 573 160 576Q155 578.500 151 576Q148 572 149.500 566L146 574Q145 566 146.500 560Q146 554 150 551Q150.500 548 153 547Z" fill="#4a78c8"/><path d="M152.500 548Q150 556 152 563Q149 570 152.500 576.500" stroke="#1f48a4" stroke-width="1.800" fill="none"/><path d="M157.500 561Q160.500 566 161.800 571Q161 575.500 157.500 575.500Q154.500 575 155 571Q157 566 157.500 561Z" fill="#f2f6fa"/></g><rect x="184.7" y="577.3" width="10.5" height="9" fill="#2a6cc0"/><rect x="186.7" y="579.8" width="6.5" height="4" fill="none" stroke="#7fb4f0" stroke-width="0.9"/><path d="M188.89999999999998 579.8v4M191.1 579.8v4" stroke="#7fb4f0" stroke-width="0.8"/><rect x="209.300" y="539.700" width="83.800" height="46.800" fill="#fcfcfc"/><g filter="url(#tcr)"><path d="M227 548L277 549.500Q279.500 550 279 554L278.500 562L250 558L225 564L225.500 550Z" fill="#cdd3f2"/><path d="M225 564L250 558L278.500 562L278.500 575L225 575Z" fill="#eceef8"/></g><g filter="url(#tbl)"><rect x="224.300" y="547.300" width="55" height="36" rx="4" fill="none" stroke="#a9a9a9" stroke-width="1.200"/><path d="M225 579.500h53.500" stroke="#7b96e4" stroke-width="5.500"/><path d="M225 576.600h53.500" stroke="#2c4cc2" stroke-width="1.800"/><path d="M232 580.500h40" stroke="#a9bcf0" stroke-width="1.200"/><path d="M237.300 573Q240 569 242.500 568Q241 565 241.800 563.500Q243.500 565 244.500 566.500Q245.500 564.500 247 564Q247 566.500 246.500 567.500L249.600 567.300Q247.500 569.500 244.500 570Q241 570.500 237.300 573Z" fill="#3556d6"/><path d="M253 572.500Q256 569 259 567.500Q256.500 564 258 561Q260 563 261 565.500Q262 562 264.500 561.500Q264 564.500 263.500 566L268 566.300Q265.500 569 261.500 569.300Q257 570 253 572.500Z" fill="#3556d6"/></g><rect x="282.5" y="577.3" width="10.5" height="9" fill="#2a6cc0"/><rect x="284.5" y="579.8" width="6.5" height="4" fill="none" stroke="#7fb4f0" stroke-width="0.9"/><path d="M286.7 579.8v4M288.9 579.8v4" stroke="#7fb4f0" stroke-width="0.8"/><rect x="15.600" y="613.600" width="83.200" height="2.500" fill="#d8d8d8"/><rect x="112.500" y="613.600" width="82.800" height="2.500" fill="#d8d8d8"/><rect x="209" y="613.600" width="84.200" height="2.500" fill="#d8d8d8"/></svg>
<svg width="1214" height="658" class="tx">
<text x="16" y="525.62" font-size="8" fill="#8e8e8e" textLength="42" lengthAdjust="spacingAndGlyphs">16 - Hawes_...</text>
<text x="64.7" y="525.62" font-size="8" fill="#8e8e8e" textLength="34" lengthAdjust="spacingAndGlyphs">3:39:30385</text>
<text x="112.5" y="525.62" font-size="8" fill="#8e8e8e" textLength="52.5" lengthAdjust="spacingAndGlyphs">16 - Hawes_ Pa...</text>
<text x="172.7" y="525.62" font-size="8" fill="#8e8e8e" textLength="22.5" lengthAdjust="spacingAndGlyphs">3:54:17</text>
<text x="209.3" y="525.62" font-size="8" fill="#8e8e8e" textLength="20.4" lengthAdjust="spacingAndGlyphs">33.png</text>
<text x="280" y="525.62" font-size="8" fill="#8e8e8e" textLength="13.2" lengthAdjust="spacingAndGlyphs">5:00</text>
<text x="16" y="600.42" font-size="8" fill="#8e8e8e" textLength="20.4" lengthAdjust="spacingAndGlyphs">36.png</text>
<text x="85.5" y="600.42" font-size="8" fill="#8e8e8e" textLength="13.2" lengthAdjust="spacingAndGlyphs">5:00</text>
<text x="112.5" y="600.42" font-size="8" fill="#8e8e8e" textLength="20.4" lengthAdjust="spacingAndGlyphs">38.png</text>
<text x="182" y="600.42" font-size="8" fill="#8e8e8e" textLength="13.2" lengthAdjust="spacingAndGlyphs">5:00</text>
<text x="209.3" y="600.42" font-size="8" fill="#8e8e8e" textLength="20.4" lengthAdjust="spacingAndGlyphs">30.png</text>
<text x="280" y="600.42" font-size="8" fill="#8e8e8e" textLength="13.2" lengthAdjust="spacingAndGlyphs">5:00</text>
</svg>
<svg width="1214" height="658"><rect x="10.500" y="631.5" width="5.500" height="4.500" fill="#2faa3a"/><path d="M11.800 631.5v-2a1.600 1.600 0 0 1 3.200 0" fill="none" stroke="#2faa3a" stroke-width="1.100"/><g fill="#c4c4c4"><rect x="28" y="628.5" width="3" height="2.500"/><rect x="28" y="633" width="3" height="2.500"/><rect x="32.500" y="629" width="5.500" height="1.400"/><rect x="32.500" y="633.5" width="5.500" height="1.400"/></g><rect x="48.300" y="628.5" width="7" height="5" fill="#2d8ceb"/><rect x="48.300" y="634.3" width="7" height="1.500" fill="#2d8ceb"/><g fill="#c4c4c4"><rect x="65.500" y="628.5" width="7" height="5"/><rect x="69" y="631" width="7" height="5" stroke="#232323" stroke-width="0.800"/></g><path d="M90 632h38" stroke="#4a4a4a" stroke-width="1"/><circle cx="87.500" cy="632" r="2.700" fill="#232323" stroke="#c0c0c0" stroke-width="1.300"/><path d="M140.500 629h8M140.500 632h8M140.500 635h6" stroke="#c4c4c4" stroke-width="1.300"/><path d="M156.500 631l2.300 2.300l2.300 -2.300" fill="none" stroke="#8a8a8a" stroke-width="1"/><g fill="#3e3e3e"><rect x="214.500" y="629" width="2.500" height="6"/><rect x="217.800" y="629" width="2.500" height="6"/><rect x="221" y="629" width="1.500" height="6"/></g><circle cx="239.300" cy="630.8" r="2.400" fill="none" stroke="#c4c4c4" stroke-width="1.200"/><path d="M237.500 632.6l-2.500 2.700" stroke="#c4c4c4" stroke-width="1.500"/><path d="M252.500 628.5h3.500l1 1.200h4.500v6h-9z" fill="#c4c4c4"/><path d="M272.500 628.5h7.500v5l-2.500 2.500h-5z" fill="#c4c4c4"/><path d="M277.500 636v-2.500h2.500" fill="none" stroke="#232323" stroke-width="0.800"/><path d="M291.500 629.5h6.500l-0.700 6.500h-5.100zM293.500 629.5v-1.200h2.500v1.200" fill="#3a3a3a"/></svg>
<div class="r" style="left:324.5px;top:411.5px;width:17px;height:14.5px;background:#171717;"></div>
<svg width="1214" height="658"><path d="M329.500 412.300L338 419.800L333.300 420.300L330 424.500Z" fill="#2d8ceb"/><rect x="327" y="432.500" width="6" height="6" fill="none" stroke="#c8c8c8" stroke-width="1" stroke-dasharray="1.500 1"/><path d="M331 435.500h4.500v-2l3 2.500l-3 2.500v-2h-4.500z" fill="#c8c8c8"/><path d="M332.500 448v10" stroke="#c8c8c8" stroke-width="1.200"/><path d="M326 453l3 -2.500v2h2.500v1h-2.500v2zM339 453l-3 -2.500v2h-2.500v1h2.500v2z" fill="#c8c8c8"/><g transform="translate(332.500,470) rotate(40)"><rect x="-5" y="-2.800" width="10" height="5.600" rx="0.800" fill="#c8c8c8"/><path d="M-3 0h6" stroke="#232323" stroke-width="0.800"/></g><path d="M326.500 483v9.500M338.500 483v9.500" stroke="#c8c8c8" stroke-width="1.200"/><path d="M328 487.700l2.500 -2.200v1.700h4v-1.700l2.500 2.200l-2.500 2.200v-1.700h-4v1.700z" fill="#c8c8c8"/><g transform="translate(332.500,505) rotate(40)"><path d="M-2.300 -5.500h4.600v3.500l1.200 2.500l-3.500 5l-3.500 -5l1.200 -2.500z" fill="#c8c8c8"/><circle cx="0" cy="1" r="0.900" fill="#232323"/><path d="M-2.300 -2.800h4.600" stroke="#232323" stroke-width="0.700"/></g><path d="M328.500 521l1.200 -0.800l1.300 1.800v-4.500h1.300v-1.200h1.300v0.600h1.300v0.800h1.300v4.800q0 4 -1.500 5h-4q-2 -3 -3.500 -6.500z" fill="#c8c8c8"/><path d="M331 517.500v3.500M332.300 516.300v4.500M333.600 517v4M334.900 517.800v3.500" stroke="#232323" stroke-width="0.400"/></svg>
<svg width="1214" height="658" class="tx">
<text x="327.5" y="543.24" font-size="13" fill="#c8c8c8" textLength="9" lengthAdjust="spacingAndGlyphs" style="font-family:'Liberation Serif',serif">T</text>
</svg>
<svg width="1214" height="658"><g fill="#8a8a8a"><circle cx="340" cy="441.500" r="0.700"/><circle cx="340" cy="459" r="0.700"/><circle cx="340" cy="493.500" r="0.700"/><circle cx="340" cy="510.500" r="0.700"/><circle cx="340" cy="527" r="0.700"/><circle cx="340" cy="544" r="0.700"/></g></svg>
<div class="r" style="left:499.5px;top:446px;width:396px;height:184px;background:#202020;"></div>
<svg width="1214" height="658" class="tx">
<text x="356.5" y="412.42" font-size="8" fill="#6a6a6a" textLength="5" lengthAdjust="spacingAndGlyphs">×</text>
<text x="368.3" y="412.60" font-size="8.5" fill="#c4c4c4" textLength="64.2" lengthAdjust="spacingAndGlyphs">16 - Hawes_ Pavane</text>
<text x="361.8" y="430.39" font-size="10.4" fill="#2d8ceb" textLength="54.7" lengthAdjust="spacingAndGlyphs" stroke="#2d8ceb" stroke-width="0.300">00:00:19:00</text>
</svg>
<svg width="1214" height="658"><g fill="#2d8ceb"><circle cx="368.700" cy="440.2" r="1.300"/><path d="M368.200 435.7h1v3h-1zM368.200 441.7h1v3h-1zM364.200 439.7h3v1h-3zM370.200 439.7h3v1h-3zM365.300 436.8l2 2l-0.700 0.700l-2 -2zM372.100 436.8l-2 2l0.700 0.700l2 -2zM365.300 443.59999999999997l2 -2l-0.700 -0.700l-2 2zM372.100 443.59999999999997l-2 -2l0.700 -0.700l2 2z"/></g><path d="M387 444.2v-4.500a3.200 3.200 0 0 1 6.400 0v4.500" fill="none" stroke="#2d8ceb" stroke-width="2"/><g fill="#2d8ceb"><rect x="407.500" y="435.7" width="3" height="3.500"/><rect x="407.500" y="440.7" width="3" height="3.500"/><path d="M411.500 436.2l5 2.500l-2.500 1l1.500 3l-1.300 0.600l-1.500 -3l-1.200 1.500z"/></g><path d="M430.500 436.2h6.500v4.500l-3.250 3.500l-3.250 -3.500z" fill="#bcbcbc"/><g transform="translate(455,440.5) rotate(-45)"><path d="M-1.300 -1.500v7.800a1.300 1.300 0 0 0 2.600 0v-7.800a3.300 3.300 0 0 0 1.700 -4.500l-1.700 1.900h-2.600l-1.700 -1.900a3.300 3.300 0 0 0 1.700 4.500z" fill="#c8c8c8"/></g><g stroke="#2a2a2a" stroke-width="1"><path d="M352 488.5h543"/><path d="M352 504.5h543"/><path d="M352 520.5h543"/><path d="M352 537.5h543"/><path d="M352 554.5h543"/><path d="M352 570.5h543"/><path d="M352 586.5h543"/><path d="M352 602.5h543"/><path d="M499.500 446v184"/></g><path d="M502 445.500h393" stroke="#d8281e" stroke-width="1.600"/><g stroke="#4a4a4a" stroke-width="1"><path d="M535.500 422v23" stroke="#6a6a6a"/><path d="M508.9 441.5v3.5"/><path d="M527.9 441.5v3.5"/><path d="M546.9 437v8"/><path d="M565.9 441.5v3.5"/><path d="M584.8 441.5v3.5"/><path d="M603.8 441.5v3.5"/><path d="M622.8 441.5v3.5"/><path d="M641.8 441.5v3.5"/><path d="M660.8 441.5v3.5"/><path d="M679.7 441.5v3.5"/><path d="M698.7 441.5v3.5"/><path d="M717.7 441.5v3.5"/><path d="M736.7 437v8"/><path d="M755.7 441.5v3.5"/><path d="M774.6 441.5v3.5"/><path d="M793.6 441.5v3.5"/><path d="M812.6 441.5v3.5"/><path d="M831.6 441.5v3.5"/><path d="M850.6 441.5v3.5"/><path d="M869.5 441.5v3.5"/><path d="M888.5 441.5v3.5"/></g><g fill="#8b9b38"><path d="M577.75 419.500h7.5v4.500l-3.75 3l-3.75 -3z"/><path d="M597.3 419.500h5v4.500l-2.5 3l-2.5 -3z"/><path d="M651.5 419.500h5v4.500l-2.5 3l-2.5 -3z"/><path d="M676.5 419.500h5v4.500l-2.5 3l-2.5 -3z"/><path d="M700.5 419.500h5v4.500l-2.5 3l-2.5 -3z"/><path d="M726.5 419.500h5v4.500l-2.5 3l-2.5 -3z"/><path d="M765.5 419.500h5v4.500l-2.5 3l-2.5 -3z"/><path d="M780.5 419.500h5v4.500l-2.5 3l-2.5 -3z"/></g><rect x="500.200" y="520.700" width="394.800" height="15.300" fill="#e283e2"/><path d="M546.400 520.700v15.300M582.400 520.700v15.300" stroke="#4a2a4a" stroke-width="1"/><rect x="500.200" y="520.700" width="394.800" height="1" fill="#eea6ee"/><rect x="511" y="523.300" width="6.500" height="5.600" fill="#4e4e4e"/><path d="M512.5 528v-3.500h2M512.5 526.200h1.500M514.8 526l2 2.300M516.8 526l-2 2.300" stroke="#b8b8b8" stroke-width="0.600" fill="none"/><rect x="553.8" y="523.300" width="6.500" height="5.600" fill="#4e4e4e"/><path d="M555.3 528v-3.500h2M555.3 526.200h1.500M557.5999999999999 526l2 2.300M559.5999999999999 526l-2 2.300" stroke="#b8b8b8" stroke-width="0.600" fill="none"/><rect x="589.8" y="523.300" width="6.500" height="5.600" fill="#4e4e4e"/><path d="M591.3 528v-3.500h2M591.3 526.200h1.500M593.5999999999999 526l2 2.300M595.5999999999999 526l-2 2.300" stroke="#b8b8b8" stroke-width="0.600" fill="none"/><rect x="546.400" y="538.500" width="348.600" height="16.100" fill="#1c7550"/><path d="M546.400 546.700h348.600" stroke="#39b884" stroke-width="1"/><path d="M546.400 554.100h348.600" stroke="#2fa876" stroke-width="1"/><path d="M546.400 538.900h348.600" stroke="#2a8c62" stroke-width="0.800"/><g fill="#43e3a6"><path d="M580 546.200Q591.5 544.300 603 546.200z"/><path d="M678 546.200Q684.0 544.300 690 546.200z"/><path d="M704 546.200Q708.0 544.300 712 546.200z"/><path d="M735.5 546.200Q738.75 544.300 742 546.200z"/><path d="M786 546.200Q793.0 544.300 800 546.200z"/><path d="M814 546.200Q818.0 544.300 822 546.200z"/><path d="M580 553.600Q591.5 551.700 603 553.600z"/><path d="M678 553.600Q684.0 551.700 690 553.600z"/><path d="M704 553.600Q708.0 551.700 712 553.600z"/><path d="M735.5 553.600Q738.75 551.700 742 553.600z"/><path d="M798 553.600Q809.0 551.700 820 553.600z"/></g><rect x="553.300" y="541" width="7" height="6.500" fill="#4e4e4e" stroke="#b0b0b0" stroke-width="0.700"/><path d="M555 546.500v-3.500h2M555 544.700h1.500M557.300 544.500l2 2.300M559.300 544.500l-2 2.300" stroke="#c8c8c8" stroke-width="0.600" fill="none"/><rect x="546.400" y="538.500" width="1.800" height="1.800" fill="#e8e8e8"/><path d="M698.300 441v188" stroke="#2d6fc0" stroke-width="1.200"/><path d="M694.500 437.500h7.500v4.500l-3.750 4l-3.750 -4z" fill="#2d8ceb"/><rect x="382.500" y="496.5" width="5" height="4" fill="#c8c8c8"/><path d="M383.700 496.5v-1.800a1.400 1.400 0 0 1 2.800 0" fill="none" stroke="#c8c8c8" stroke-width="1"/><rect x="384.500" y="497.7" width="1" height="1.500" fill="#232323"/><rect x="382.500" y="511.9" width="5" height="4" fill="#c8c8c8"/><path d="M383.700 511.9v-1.800a1.400 1.400 0 0 1 2.800 0" fill="none" stroke="#c8c8c8" stroke-width="1"/><rect x="384.500" y="513.1" width="1" height="1.500" fill="#232323"/><rect x="382.500" y="527.7" width="5" height="4" fill="#c8c8c8"/><path d="M383.700 527.7v-1.800a1.400 1.400 0 0 1 2.800 0" fill="none" stroke="#c8c8c8" stroke-width="1"/><rect x="384.500" y="528.9000000000001" width="1" height="1.500" fill="#232323"/><rect x="382.500" y="545.9" width="5" height="4" fill="#c8c8c8"/><path d="M383.700 545.9v-1.800a1.400 1.400 0 0 1 2.800 0" fill="none" stroke="#c8c8c8" stroke-width="1"/><rect x="384.500" y="547.1" width="1" height="1.500" fill="#232323"/><rect x="382.500" y="562.2" width="5" height="4" fill="#c8c8c8"/><path d="M383.700 562.2v-1.800a1.400 1.400 0 0 1 2.800 0" fill="none" stroke="#c8c8c8" stroke-width="1"/><rect x="384.500" y="563.4000000000001" width="1" height="1.500" fill="#232323"/><rect x="382.500" y="577.8" width="5" height="4" fill="#c8c8c8"/><path d="M383.700 577.8v-1.800a1.400 1.400 0 0 1 2.800 0" fill="none" stroke="#c8c8c8" stroke-width="1"/><rect x="384.500" y="579.0" width="1" height="1.500" fill="#232323"/><rect x="382.500" y="593.1" width="5" height="4" fill="#c8c8c8"/><path d="M383.700 593.1v-1.800a1.400 1.400 0 0 1 2.800 0" fill="none" stroke="#c8c8c8" stroke-width="1"/><rect x="384.500" y="594.3000000000001" width="1" height="1.500" fill="#232323"/><rect x="417" y="493.8" width="5.500" height="6.400" rx="0.800" fill="none" stroke="#c8c8c8" stroke-width="1"/><path d="M422.500 495.5l2.500 -1.300v5.600l-2.500 -1.300z" fill="#c8c8c8"/><path d="M418.500 497h2.500" stroke="#c8c8c8" stroke-width="0.900"/><rect x="417" y="509.2" width="5.500" height="6.400" rx="0.800" fill="none" stroke="#c8c8c8" stroke-width="1"/><path d="M422.500 510.9l2.500 -1.300v5.600l-2.500 -1.300z" fill="#c8c8c8"/><path d="M418.500 512.4h2.500" stroke="#c8c8c8" stroke-width="0.900"/><rect x="417" y="525.0" width="5.500" height="6.400" rx="0.800" fill="none" stroke="#c8c8c8" stroke-width="1"/><path d="M422.500 526.7l2.500 -1.300v5.600l-2.500 -1.300z" fill="#c8c8c8"/><path d="M418.500 528.2h2.500" stroke="#c8c8c8" stroke-width="0.900"/><rect x="417" y="543.1999999999999" width="5.500" height="6.400" rx="0.800" fill="none" stroke="#c8c8c8" stroke-width="1"/><path d="M422.500 544.9l2.500 -1.300v5.600l-2.500 -1.300z" fill="#c8c8c8"/><path d="M418.500 546.4h2.500" stroke="#c8c8c8" stroke-width="0.900"/><rect x="417" y="559.5" width="5.500" height="6.400" rx="0.800" fill="none" stroke="#c8c8c8" stroke-width="1"/><path d="M422.500 561.2l2.500 -1.300v5.600l-2.500 -1.300z" fill="#c8c8c8"/><path d="M418.500 562.7h2.500" stroke="#c8c8c8" stroke-width="0.900"/><rect x="417" y="575.0999999999999" width="5.500" height="6.400" rx="0.800" fill="none" stroke="#c8c8c8" stroke-width="1"/><path d="M422.500 576.8l2.500 -1.300v5.600l-2.500 -1.300z" fill="#c8c8c8"/><path d="M418.500 578.3h2.500" stroke="#c8c8c8" stroke-width="0.900"/><path d="M433 497q4.500 -4.800 9 0q-4.500 4.800 -9 0z" fill="#c8c8c8"/><circle cx="437.500" cy="497" r="1.500" fill="#232323"/><path d="M433 512.4q4.500 -4.800 9 0q-4.500 4.800 -9 0z" fill="#c8c8c8"/><circle cx="437.500" cy="512.4" r="1.500" fill="#232323"/><path d="M433 528.2q4.500 -4.800 9 0q-4.500 4.800 -9 0z" fill="#c8c8c8"/><circle cx="437.500" cy="528.2" r="1.500" fill="#232323"/><rect x="469.700" y="541.9" width="2.800" height="6" rx="1.400" fill="#3e3e3e"/><path d="M468.300 545.4a2.800 2.800 0 0 0 5.600 0M471.100 548.4v2.500" fill="none" stroke="#3e3e3e" stroke-width="0.900"/><rect x="469.700" y="558.2" width="2.800" height="6" rx="1.400" fill="#3e3e3e"/><path d="M468.300 561.7a2.800 2.800 0 0 0 5.600 0M471.100 564.7v2.500" fill="none" stroke="#3e3e3e" stroke-width="0.900"/><rect x="469.700" y="573.8" width="2.800" height="6" rx="1.400" fill="#3e3e3e"/><path d="M468.300 577.3a2.800 2.800 0 0 0 5.600 0M471.100 580.3v2.500" fill="none" stroke="#3e3e3e" stroke-width="0.900"/><path d="M487.500 588l3 3.200l-3 3.200zM494.500 588l-3 3.200l3 3.200z" fill="#d0d0d0"/><path d="M491 588v6.400" stroke="#d0d0d0" stroke-width="0.800"/><rect x="370" y="630" width="61" height="5" rx="2.500" fill="#2e2e2e"/><rect x="431" y="630" width="465" height="5" fill="#1c1c1c"/><g fill="#232323" stroke="#bdbdbd" stroke-width="1.300"><circle cx="370" cy="632.500" r="2.600"/><circle cx="430.600" cy="632.500" r="2.600"/></g><rect x="896" y="453" width="6" height="79" rx="3" fill="#2e2e2e"/><rect x="896" y="543" width="6" height="80" rx="3" fill="#2e2e2e"/><g fill="#232323" stroke="#bdbdbd" stroke-width="1.300"><circle cx="899" cy="453" r="2.600"/><circle cx="899" cy="532" r="2.600"/><circle cx="899" cy="542.800" r="2.600"/><circle cx="899" cy="623" r="2.600"/></g></svg>
<svg width="1214" height="658" class="tx">
<text x="529" y="435.72" font-size="8" fill="#a8a8a8" textLength="36" lengthAdjust="spacingAndGlyphs">00:00:15:00</text>
<text x="719" y="435.72" font-size="8" fill="#a8a8a8" textLength="36" lengthAdjust="spacingAndGlyphs">00:00:20:00</text>
</svg>
<div class="r" style="left:391.7px;top:520.5px;width:20.5px;height:16px;background:#15599a;"></div>
<div class="r" style="left:391.7px;top:538.4px;width:20.5px;height:15.6px;background:#15599a;"></div>
<div class="r" style="left:391.7px;top:554.8px;width:20.5px;height:15.4px;background:#15599a;"></div>
<div class="r" style="left:391.7px;top:570.8px;width:20.5px;height:15.4px;background:#15599a;"></div>
<svg width="1214" height="658" class="tx">
<text x="397.5" y="499.75" font-size="7" fill="#8a8a8a" textLength="7.5" lengthAdjust="spacingAndGlyphs">V3</text>
<text x="397.5" y="515.15" font-size="7" fill="#8a8a8a" textLength="7.5" lengthAdjust="spacingAndGlyphs">V2</text>
<text x="397.5" y="530.95" font-size="7" fill="#b8cbe0" textLength="7.5" lengthAdjust="spacingAndGlyphs">V1</text>
<text x="397.5" y="549.15" font-size="7" fill="#b8cbe0" textLength="7.5" lengthAdjust="spacingAndGlyphs">A1</text>
<text x="397.5" y="565.45" font-size="7" fill="#b8cbe0" textLength="7.5" lengthAdjust="spacingAndGlyphs">A2</text>
<text x="397.5" y="581.05" font-size="7" fill="#b8cbe0" textLength="7.5" lengthAdjust="spacingAndGlyphs">A3</text>
<text x="434.5" y="549.15" font-size="7" fill="#9a9a9a" textLength="5.5" lengthAdjust="spacingAndGlyphs">M</text>
<text x="452" y="549.15" font-size="7" fill="#9a9a9a" textLength="4" lengthAdjust="spacingAndGlyphs">S</text>
<text x="434.5" y="565.45" font-size="7" fill="#9a9a9a" textLength="5.5" lengthAdjust="spacingAndGlyphs">M</text>
<text x="452" y="565.45" font-size="7" fill="#9a9a9a" textLength="4" lengthAdjust="spacingAndGlyphs">S</text>
<text x="434.5" y="581.05" font-size="7" fill="#9a9a9a" textLength="5.5" lengthAdjust="spacingAndGlyphs">M</text>
<text x="452" y="581.05" font-size="7" fill="#9a9a9a" textLength="4" lengthAdjust="spacingAndGlyphs">S</text>
<text x="393.7" y="596.72" font-size="8" fill="#8a8a8a" textLength="22" lengthAdjust="spacingAndGlyphs">Master</text>
<text x="441.8" y="596.72" font-size="8" fill="#2d6fc0" textLength="9.2" lengthAdjust="spacingAndGlyphs">0.0</text>
<text x="523" y="528.95" font-size="7" fill="#21142a" textLength="16.6" lengthAdjust="spacingAndGlyphs">03.png</text>
<text x="565" y="528.95" font-size="7" fill="#21142a" textLength="14.3" lengthAdjust="spacingAndGlyphs">03.pn</text>
<text x="601" y="528.95" font-size="7" fill="#21142a" textLength="17.2" lengthAdjust="spacingAndGlyphs">04.png</text>
</svg>
<svg width="1214" height="658"><rect x="921.500" y="417" width="46" height="205" fill="#1b1b1b" stroke="#2d2d2d" stroke-width="1"/><rect x="921.500" y="417" width="46" height="6.500" fill="#161616" stroke="#2d2d2d" stroke-width="1"/><path d="M944.500 417v6.500" stroke="#2d2d2d" stroke-width="1"/><path d="M921.500 621h46" stroke="#c8b400" stroke-width="1.300"/><path d="M969 421v200" stroke="#5a5a5a" stroke-width="1.600" stroke-dasharray="1 2.320"/><g stroke="#6a6a6a" stroke-width="1"><path d="M968 423.8h3"/><path d="M968 443.6h3"/><path d="M968 463.3h3"/><path d="M968 483.1h3"/><path d="M968 502.8h3"/><path d="M968 522.5h3"/><path d="M968 542.3h3"/><path d="M968 562.0h3"/><path d="M968 581.8h3"/><path d="M968 601.5h3"/><path d="M968 621.3h3"/></g><rect x="927" y="625.500" width="9.500" height="9.500" fill="#2f2f2f"/><rect x="950" y="625.500" width="9.500" height="9.500" fill="#2f2f2f"/></svg>
<svg width="1214" height="658" class="tx">
<text x="973" y="426.17" font-size="6.5" fill="#7c7c7c" textLength="3.5" lengthAdjust="spacingAndGlyphs">0</text>
<text x="973" y="445.92" font-size="6.5" fill="#7c7c7c" textLength="6" lengthAdjust="spacingAndGlyphs">-6</text>
<text x="973" y="465.67" font-size="6.5" fill="#7c7c7c" textLength="8.5" lengthAdjust="spacingAndGlyphs">-12</text>
<text x="973" y="485.42" font-size="6.5" fill="#7c7c7c" textLength="8.5" lengthAdjust="spacingAndGlyphs">-18</text>
<text x="973" y="505.17" font-size="6.5" fill="#7c7c7c" textLength="8.5" lengthAdjust="spacingAndGlyphs">-24</text>
<text x="973" y="524.92" font-size="6.5" fill="#7c7c7c" textLength="8.5" lengthAdjust="spacingAndGlyphs">-30</text>
<text x="973" y="544.67" font-size="6.5" fill="#7c7c7c" textLength="8.5" lengthAdjust="spacingAndGlyphs">-36</text>
<text x="973" y="564.42" font-size="6.5" fill="#7c7c7c" textLength="8.5" lengthAdjust="spacingAndGlyphs">-42</text>
<text x="973" y="584.17" font-size="6.5" fill="#7c7c7c" textLength="8.5" lengthAdjust="spacingAndGlyphs">-48</text>
<text x="973" y="603.92" font-size="6.5" fill="#7c7c7c" textLength="8.5" lengthAdjust="spacingAndGlyphs">-54</text>
<text x="973" y="623.67" font-size="6.5" fill="#7c7c7c" textLength="6" lengthAdjust="spacingAndGlyphs">dB</text>
<text x="929.7" y="632.85" font-size="7" fill="#c0c0c0" textLength="4" lengthAdjust="spacingAndGlyphs">S</text>
<text x="952.7" y="632.85" font-size="7" fill="#c0c0c0" textLength="4" lengthAdjust="spacingAndGlyphs">S</text>
<text x="36" y="654.42" font-size="8" fill="#8e8e8e" textLength="331" lengthAdjust="spacingAndGlyphs">Click to select, or click in empty space and drag to marquee select. Use Shift, Alt, and Ctrl for other options.</text>
</svg>
<svg width="1214" height="658"><path d="M3.500 649.500h3a2 2 0 0 1 0 4h-3a2 2 0 0 1 0 -4z" fill="none" stroke="#8a8a8a" stroke-width="1"/><circle cx="7.500" cy="651.500" r="2.300" fill="none" stroke="#8a8a8a" stroke-width="1"/></svg>
<svg width="1214" height="658"><ellipse cx="676.600" cy="491.900" rx="194.800" ry="103.600" fill="none" stroke="#0aa6f2" stroke-width="3.700"/></svg>
</body></html>
